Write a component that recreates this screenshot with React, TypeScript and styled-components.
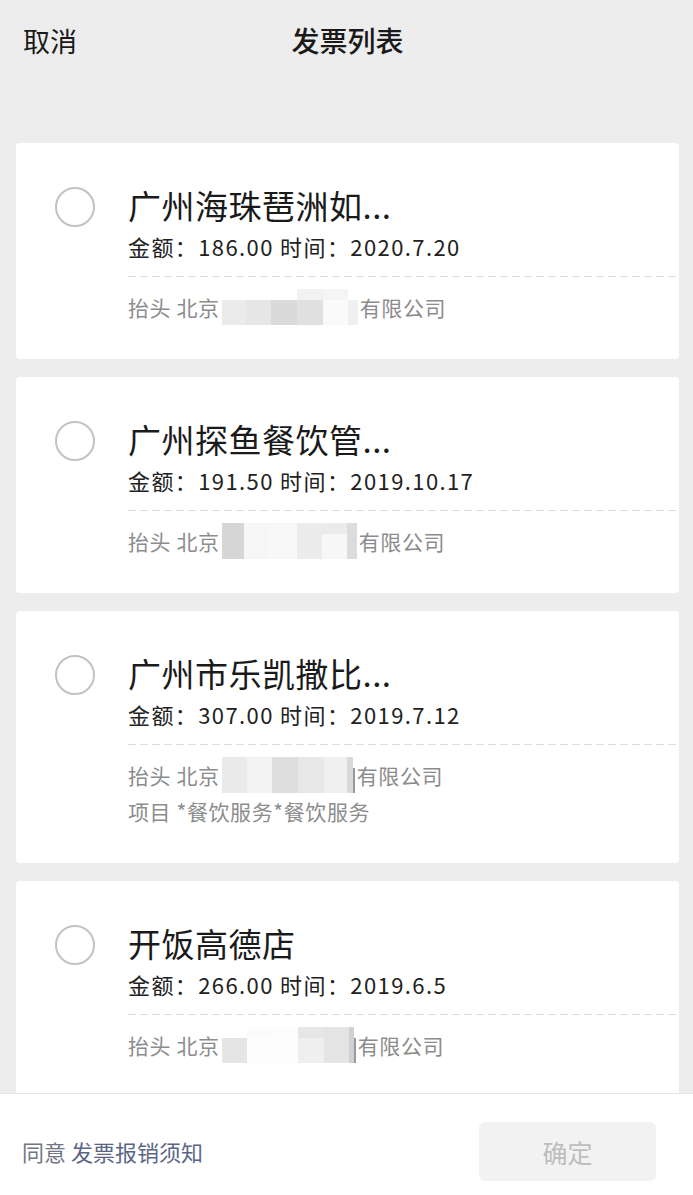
import React from 'react';
import styled, { createGlobalStyle } from 'styled-components';

const GlobalStyle = createGlobalStyle`
  html, body {
    margin: 0;
    padding: 0;
    background: #ededed;
    font-family: "Noto Sans CJK SC", "Noto Sans", sans-serif;
  }
  * { box-sizing: border-box; }
`;

const Page = styled.div`
  height: 100vh;
  display: flex;
  flex-direction: column;
  background: #ededed;
  overflow: hidden;
`;

const Header = styled.div`
  position: relative;
  height: 80px;
  display: flex;
  align-items: center;
  justify-content: center;
  flex-shrink: 0;
`;

const Cancel = styled.span`
  position: absolute;
  left: 23px;
  font-size: 27px;
  color: #1a1a1a;
`;

const Title = styled.span`
  font-size: 28px;
  font-weight: 500;
  color: #1a1a1a;
  margin-left: 2px;
`;

const List = styled.div`
  flex: 1;
  overflow: hidden;
  padding: 63px 14px 0 16px;
  display: flex;
  flex-direction: column;
  gap: 18px;
`;

const Card = styled.div`
  background: #fff;
  border-radius: 4px;
  display: flex;
  padding: 40px 0 34px 39px;
  flex-shrink: 0;
`;

const Radio = styled.div`
  width: 40px;
  height: 40px;
  border-radius: 50%;
  border: 2px solid #c2c2c2;
  flex-shrink: 0;
  margin-top: 4px;
`;

const Body = styled.div`
  flex: 1;
  margin-left: 33px;
  display: flex;
  flex-direction: column;
`;

const Name = styled.div`
  font-size: 33px;
  line-height: 44px;
  color: #1a1a1a;
  letter-spacing: 0.5px;
`;

const Amount = styled.div`
  font-size: 22px;
  line-height: 30px;
  margin-top: 4px;
  color: #222;
  letter-spacing: 1.4px;
`;

const Dashed = styled.div`
  height: 1px;
  margin: 15px 0 12px;
  background: repeating-linear-gradient(to right, #dcdcdc 0 8px, transparent 8px 12px);
`;

const Sub = styled.div`
  font-size: 21px;
  line-height: 36px;
  height: 36px;
  color: #8c8c8c;
  display: flex;
  align-items: center;
  white-space: nowrap;
  letter-spacing: 0.6px;
`;

const Mosaic = styled.span`
  display: inline-flex;
  height: 36px;
  margin: 0 2px;
`;

const MosaicCol = styled.span<{ $w: number }>`
  width: ${(p) => p.$w}px;
  display: flex;
  flex-direction: column;
`;

const MosaicCell = styled.span<{ $h: number; $c: string }>`
  height: ${(p) => p.$h}px;
  background: ${(p) => p.$c};
`;

const Footer = styled.div`
  flex-shrink: 0;
  height: 102px;
  background: #fff;
  border-top: 1px solid #e6e6e6;
  display: flex;
  align-items: flex-start;
  justify-content: space-between;
  padding: 28px 37px 0 22px;
`;

const Agree = styled.div`
  font-size: 22px;
  line-height: 59px;
  color: #717584;
`;

const Link = styled.span`
  color: #5b6687;
  margin-left: 5px;
`;

const Confirm = styled.button`
  width: 177px;
  height: 59px;
  border: none;
  border-radius: 6px;
  background: #f2f2f2;
  color: #bdbdbd;
  font-family: inherit;
  font-size: 25px;
`;

type Col = { w: number; top: string; bottom: string };

interface Invoice {
  name: string;
  amount: string;
  time: string;
  mosaic: Col[];
  project?: string;
}

const invoices: Invoice[] = [
  {
    name: '广州海珠琶洲如...',
    amount: '186.00',
    time: '2020.7.20',
    mosaic: [
      { w: 24, top: '#fff', bottom: '#ebebeb' },
      { w: 25, top: '#fff', bottom: '#e6e6e6' },
      { w: 26, top: '#fff', bottom: '#dadada' },
      { w: 26, top: '#f2f2f2', bottom: '#e0e0e0' },
      { w: 25, top: '#f5f5f5', bottom: '#fafafa' },
      { w: 10, top: '#fff', bottom: '#f0f0f0' },
    ],
  },
  {
    name: '广州探鱼餐饮管...',
    amount: '191.50',
    time: '2019.10.17',
    mosaic: [
      { w: 22, top: '#d6d6d6', bottom: '#d6d6d6' },
      { w: 26, top: '#f6f6f6', bottom: '#f6f6f6' },
      { w: 27, top: '#f8f8f8', bottom: '#f8f8f8' },
      { w: 25, top: '#ececec', bottom: '#ececec' },
      { w: 25, top: '#ebebeb', bottom: '#f7f7f7' },
      { w: 10, top: '#dcdcdc', bottom: '#dcdcdc' },
    ],
  },
  {
    name: '广州市乐凯撒比...',
    amount: '307.00',
    time: '2019.7.12',
    project: '*餐饮服务*餐饮服务',
    mosaic: [
      { w: 25, top: '#eaeaea', bottom: '#eaeaea' },
      { w: 25, top: '#f3f3f3', bottom: '#f3f3f3' },
      { w: 26, top: '#dedede', bottom: '#dedede' },
      { w: 26, top: '#e8e8e8', bottom: '#e8e8e8' },
      { w: 23, top: '#f0f0f0', bottom: '#f0f0f0' },
      { w: 6, top: '#d9d9d9', bottom: '#d9d9d9' },
      { w: 2, top: '#fff', bottom: '#999' },
    ],
  },
  {
    name: '开饭高德店',
    amount: '266.00',
    time: '2019.6.5',
    mosaic: [
      { w: 25, top: '#fff', bottom: '#e5e5e5' },
      { w: 25, top: '#fbfbfb', bottom: '#fdfdfd' },
      { w: 26, top: '#fdfdfd', bottom: '#fdfdfd' },
      { w: 26, top: '#e6e6e6', bottom: '#efefef' },
      { w: 25, top: '#e4e4e4', bottom: '#e4e4e4' },
      { w: 5, top: '#d0d0d0', bottom: '#d0d0d0' },
      { w: 2, top: '#fff', bottom: '#999' },
    ],
  },
];

const Blur: React.FC<{ cols: Col[] }> = ({ cols }) => (
  <Mosaic>
    {cols.map((c, i) => (
      <MosaicCol key={i} $w={c.w}>
        <MosaicCell $h={11} $c={c.top} />
        <MosaicCell $h={25} $c={c.bottom} />
      </MosaicCol>
    ))}
  </Mosaic>
);

const InvoiceCard: React.FC<{ item: Invoice }> = ({ item }) => (
  <Card>
    <Radio />
    <Body>
      <Name>{item.name}</Name>
      <Amount>
        金额：{item.amount} 时间：{item.time}
      </Amount>
      <Dashed />
      <Sub>
        抬头 北京
        <Blur cols={item.mosaic} />
        有限公司
      </Sub>
      {item.project ? <Sub>项目 {item.project}</Sub> : null}
    </Body>
  </Card>
);

export default function App() {
  return (
    <>
      <GlobalStyle />
      <Page>
        <Header>
          <Cancel>取消</Cancel>
          <Title>发票列表</Title>
        </Header>
        <List>
          {invoices.map((item) => (
            <InvoiceCard key={item.name} item={item} />
          ))}
        </List>
        <Footer>
          <Agree>
            同意<Link>发票报销须知</Link>
          </Agree>
          <Confirm>确定</Confirm>
        </Footer>
      </Page>
    </>
  );
}
